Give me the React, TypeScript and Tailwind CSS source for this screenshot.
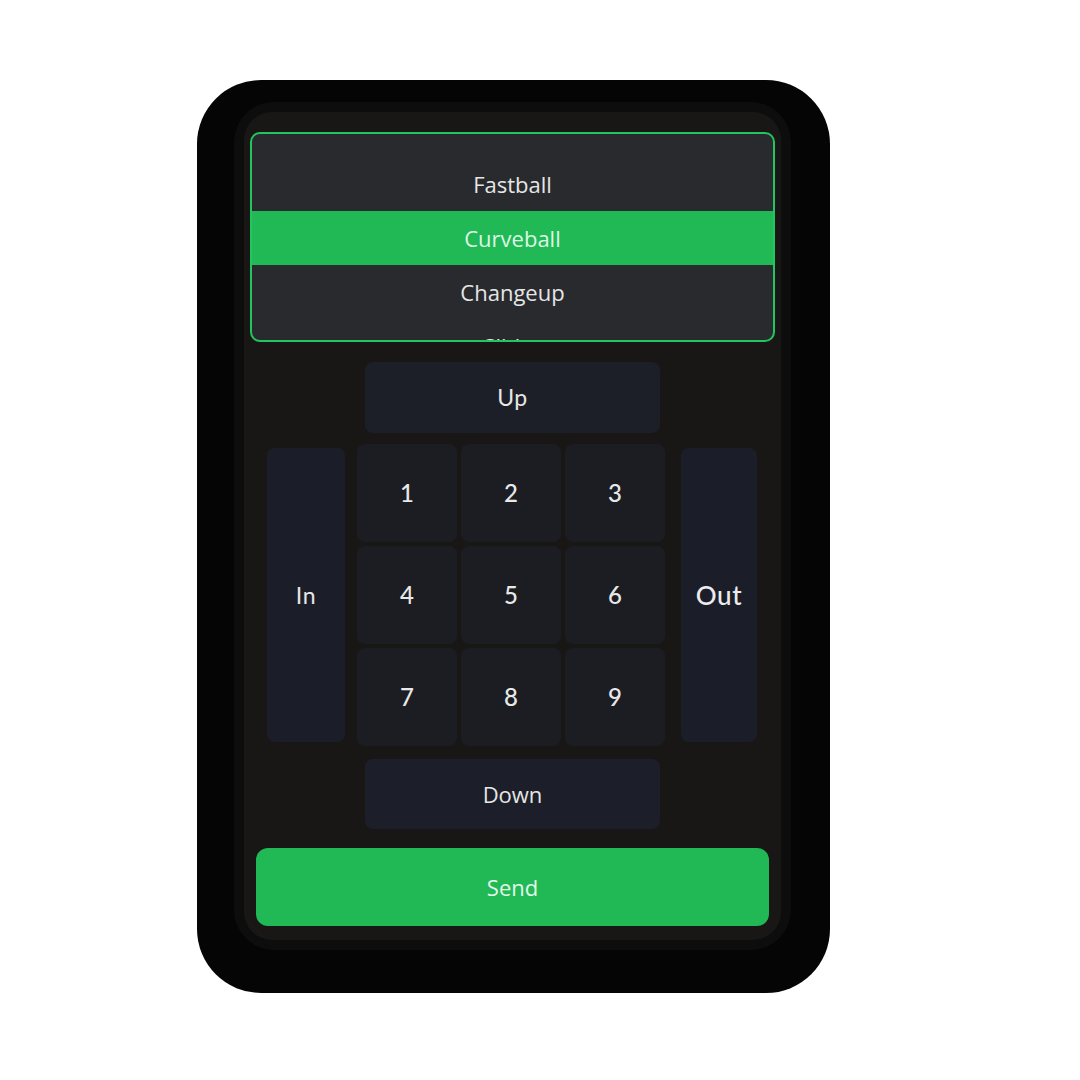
const pitches = ["Fastball", "Curveball", "Changeup", "Slider"]
const selected = "Curveball"

const pad = "flex items-center justify-center rounded-lg bg-[#1b1d23] text-[#e8e8e8] text-[24px] font-medium"

export default function App() {
    return (
        <div className="w-[1080px] h-[1080px] bg-white pt-[80px] pl-[197px]" style={{ fontFamily: "'Open Sans', 'Noto Sans', sans-serif" }}>
            {/* Device body */}
            <div className="w-[633px] h-[913px] rounded-[64px] bg-[#050505] pt-[22px] pl-[37px]">
                <div className="w-[557px] h-[848px] rounded-[40px] bg-[#0d0d0d] p-[10px]">
                    {/* Screen */}
                    <div className="w-[537px] h-[828px] rounded-[28px] bg-[#191716] flex flex-col pt-[20px]">
                        {/* Pitch picker */}
                        <div className="mx-[6px] h-[210px] rounded-[10px] border-2 border-[#22c55e] bg-[#282a2e] overflow-hidden">
                            <div className="pt-[23px] flex flex-col">
                                {pitches.map(p => (
                                    <div
                                        key={p}
                                        className={
                                            p === selected
                                                ? "h-[54px] flex items-center justify-center bg-[#20b956] text-[#dcf7e4] text-[22px]"
                                                : "h-[54px] flex items-center justify-center text-[#e6e6e6] text-[22px]"
                                        }
                                    >
                                        {p}
                                    </div>
                                ))}
                            </div>
                        </div>

                        {/* Up */}
                        <div className="mt-[20px] flex justify-center">
                            <div className="w-[295px] h-[71px] rounded-lg bg-[#1c1f28] flex items-center justify-center text-[#e6e6e6] text-[23px] tracking-wide" style={{ fontFamily: "Lato, sans-serif" }}>
                                Up
                            </div>
                        </div>

                        {/* Zone grid */}
                        <div className="mt-[11px] flex items-center pl-[23px]" style={{ fontFamily: "Lato, sans-serif" }}>
                            <div className="w-[78px] h-[294px] rounded-lg bg-[#1b1e29] flex items-center justify-center text-[#e6e6e6] text-[23px] tracking-wide">
                                In
                            </div>
                            <div className="ml-[12px] w-[308px] grid grid-cols-3 gap-[4px]">
                                {[1, 2, 3, 4, 5, 6, 7, 8, 9].map(n => (
                                    <div key={n} className={`${pad} h-[98px]`}>{n}</div>
                                ))}
                            </div>
                            <div className="ml-[16px] w-[76px] h-[294px] rounded-lg bg-[#1b1e29] flex items-center justify-center text-[#ececec] text-[26px] font-medium tracking-wide">
                                Out
                            </div>
                        </div>

                        {/* Down */}
                        <div className="mt-[13px] flex justify-center">
                            <div className="w-[295px] h-[70px] rounded-lg bg-[#1c1f29] flex items-center justify-center text-[#e6e6e6] text-[22px]">
                                Down
                            </div>
                        </div>

                        {/* Send */}
                        <div className="mt-[19px] mx-[12px] h-[78px] rounded-xl bg-[#20b955] flex items-center justify-center text-[#e4f8ea] text-[22px]">
                            Send
                        </div>
                    </div>
                </div>
            </div>
        </div>
    )
}
